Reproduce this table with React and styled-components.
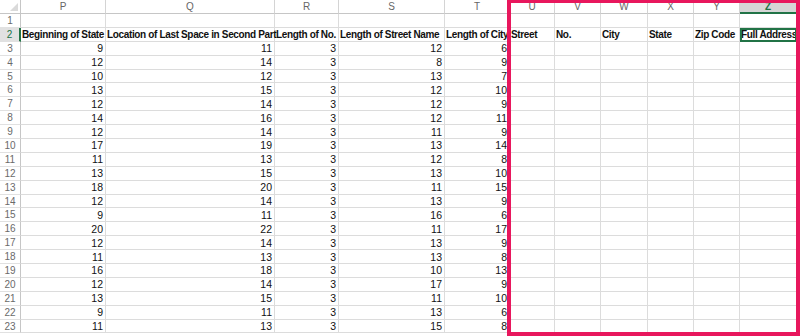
import React from 'react'
import styled, { createGlobalStyle } from 'styled-components'

const GlobalStyle = createGlobalStyle`
    html, body {
        margin: 0;
        padding: 0;
        background: #ffffff;
        overflow: hidden;
    }
    body {
        font-family: "Liberation Sans", Arial, sans-serif;
    }
`

const columns = [
    { letter: 'P', width: 85 },
    { letter: 'Q', width: 169 },
    { letter: 'R', width: 64 },
    { letter: 'S', width: 106 },
    { letter: 'T', width: 65 },
    { letter: 'U', width: 45 },
    { letter: 'V', width: 46 },
    { letter: 'W', width: 47 },
    { letter: 'X', width: 46 },
    { letter: 'Y', width: 46 },
    { letter: 'Z', width: 57 },
]

const headings = [
    'Beginning of State',
    'Location of Last Space in Second Part',
    'Length of No.',
    'Length of Street Name',
    'Length of City',
    'Street',
    'No.',
    'City',
    'State',
    'Zip Code',
    'Full Address',
]

// P, Q, R, S, T for rows 3 to 23
const data = [
    [9, 11, 3, 12, 6],
    [12, 14, 3, 8, 9],
    [10, 12, 3, 13, 7],
    [13, 15, 3, 12, 10],
    [12, 14, 3, 12, 9],
    [14, 16, 3, 12, 11],
    [12, 14, 3, 11, 9],
    [17, 19, 3, 13, 14],
    [11, 13, 3, 12, 8],
    [13, 15, 3, 13, 10],
    [18, 20, 3, 11, 15],
    [12, 14, 3, 13, 9],
    [9, 11, 3, 16, 6],
    [20, 22, 3, 11, 17],
    [12, 14, 3, 13, 9],
    [11, 13, 3, 13, 8],
    [16, 18, 3, 10, 13],
    [12, 14, 3, 17, 9],
    [13, 15, 3, 11, 10],
    [9, 11, 3, 13, 6],
    [11, 13, 3, 15, 8],
]

const SELECTED_COL = 'Z'
const SELECTED_ROW = 2

export default function App() {
    const template = `21px ${columns.map(c => c.width + 'px').join(' ')}`

    return <Sheet>
        <GlobalStyle />
        <Grid style={{ gridTemplateColumns: template }}>
            <Corner>
                <CornerTriangle />
            </Corner>
            {columns.map(c =>
                <ColHead key={c.letter} selected={c.letter === SELECTED_COL}>{c.letter}</ColHead>
            )}

            <RowHead>1</RowHead>
            {columns.map(c => <Cell key={'1' + c.letter} />)}

            <RowHead selected>2</RowHead>
            {headings.map((h, i) =>
                <Cell key={'2' + i} bold selected={columns[i].letter === SELECTED_COL && SELECTED_ROW === 2}>
                    {h}
                </Cell>
            )}

            {data.map((row, r) => <React.Fragment key={r}>
                <RowHead>{r + 3}</RowHead>
                {columns.map((c, i) =>
                    <Cell key={c.letter} align="right">{row[i] !== undefined ? row[i] : ''}</Cell>
                )}
            </React.Fragment>)}
        </Grid>
        <Highlight />
    </Sheet>
}

const Sheet = styled.div`
    position: relative;
    width: 800px;
    height: 336px;
    overflow: hidden;
    background: #ffffff;
`

const Grid = styled.div`
    display: grid;
    grid-template-rows: 14px repeat(23, 13.9px);
    width: max-content;
`

const Corner = styled.div`
    position: relative;
    box-sizing: border-box;
    border-right: 1px solid #c6c6c6;
    border-bottom: 1px solid #c6c6c6;
    background: #ffffff;
`

const CornerTriangle = styled.div`
    position: absolute;
    right: 2px;
    bottom: 2px;
    width: 0;
    height: 0;
    border-left: 8px solid transparent;
    border-bottom: 8px solid #dadada;
`

const ColHead = styled.div`
    box-sizing: border-box;
    display: flex;
    align-items: center;
    justify-content: center;
    font-size: 10px;
    color: ${p => p.selected ? '#217346' : '#666666'};
    font-weight: ${p => p.selected ? 'bold' : 'normal'};
    background: ${p => p.selected ? '#d6d6d6' : '#ffffff'};
    border-right: 1px solid #d4d4d4;
    border-bottom: ${p => p.selected ? '2px solid #217346' : '1px solid #c6c6c6'};
`

const RowHead = styled.div`
    box-sizing: border-box;
    display: flex;
    align-items: center;
    justify-content: center;
    font-size: 10px;
    color: ${p => p.selected ? '#217346' : '#6a6a6a'};
    background: ${p => p.selected ? '#e1e1e1' : '#ffffff'};
    border-right: ${p => p.selected ? '2px solid #217346' : '1px solid #c6c6c6'};
    border-bottom: 1px solid #e1e1e1;
`

const Cell = styled.div`
    box-sizing: border-box;
    position: relative;
    display: flex;
    align-items: center;
    justify-content: ${p => p.align === 'right' ? 'flex-end' : 'flex-start'};
    padding: 0 2px 0 1px;
    font-size: ${p => p.bold ? '10px' : '10.5px'};
    font-weight: ${p => p.bold ? 'bold' : 'normal'};
    letter-spacing: ${p => p.bold ? '-0.35px' : '0'};
    color: #111111;
    white-space: nowrap;
    overflow: visible;
    border-right: 1px solid #dcdcdc;
    border-bottom: 1px solid #dcdcdc;
    outline: ${p => p.selected ? '2px solid #217346' : 'none'};
    outline-offset: -2px;
    z-index: ${p => p.selected ? 2 : 0};
`

const Highlight = styled.div`
    position: absolute;
    left: 507px;
    top: -1px;
    width: 293px;
    height: 337px;
    box-sizing: border-box;
    border: 4px solid #e8175d;
    pointer-events: none;
    z-index: 5;
`
